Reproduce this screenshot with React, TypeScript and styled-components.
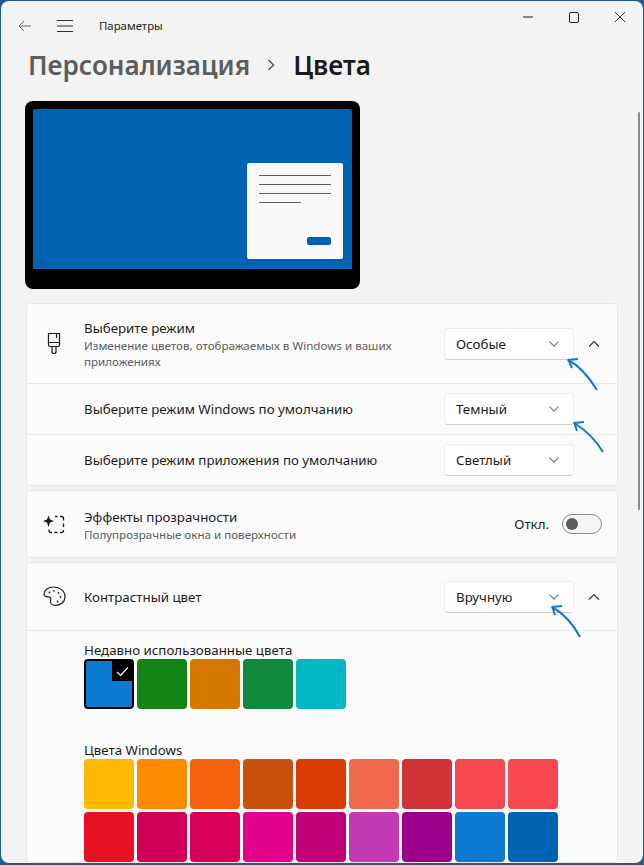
import React from 'react';
import styled, { createGlobalStyle } from 'styled-components';

const recentColors = ['#0c7ad0', '#128516', '#d47800', '#10893e', '#00b7c3'];
const windowsColors = [
  '#ffb900', '#ff8c00', '#f7630c', '#ca5010', '#da3b01', '#ef6950', '#d13438', '#f7474f', '#f7474f',
  '#e81123', '#cf0055', '#d60056', '#e3008c', '#bf0077', '#c239b3', '#9a0089', '#0c7ad0', '#0063b1',
];

const Brush = () => (
  <svg width="20" height="23" viewBox="0 0 20 23" fill="none" stroke="#1b1b1b" strokeWidth="1.2">
    <path d="M4.500 1.500h11v11.500a1.500 1.500 0 0 1-1.500 1.500H6A1.500 1.500 0 0 1 4.500 13zM4.500 10.500h11M12.500 1.500v4.500M8 14.500v5a2 2 0 0 0 4 0v-5" />
  </svg>
);

const Sparkle = () => (
  <svg width="24" height="24" viewBox="0 0 24 24" fill="none" stroke="#1b1b1b" strokeWidth="1.3">
    <path d="M6.500 3.500l1.500 4 4 1.500-4 1.500-1.500 4.500-1.500-4.500L1 9l4-1.500z" fill="#1b1b1b" stroke="none" />
    <path d="M13 4.500h2.500M18 4.500h1.500A2 2 0 0 1 21.500 6.500V8.500M21.500 11.500v3.500M21.500 18v.500a2 2 0 0 1-2 2H18M15.500 20.500h-3M10 20.500H9a2 2 0 0 1-2-2v-1" />
  </svg>
);

const Palette = () => (
  <svg width="23" height="21" viewBox="0 0 23 21" fill="none" stroke="#1b1b1b" strokeWidth="1.2">
    <path d="M10.500 1c-5 0-9.500 3-9.500 7 0 2.300 2.200 3 3.800 2.800 1.900-.2 3 .6 3 2.200 0 .8-.3 1.400-.3 2.400 0 2.400 2.400 4 5 4 5 0 9.500-3.500 9.500-8.400C22 4.700 16.800 1 10.500 1z" />
    <circle cx="6.500" cy="6.500" r=".9" fill="#1b1b1b" stroke="none" />
    <circle cx="11" cy="4.800" r=".9" fill="#1b1b1b" stroke="none" />
    <circle cx="15.500" cy="6.800" r=".9" fill="#1b1b1b" stroke="none" />
    <circle cx="17.500" cy="11" r=".9" fill="#1b1b1b" stroke="none" />
    <circle cx="14.500" cy="15.500" r=".9" fill="#1b1b1b" stroke="none" />
  </svg>
);

const Chevron = ({ up }: { up?: boolean }) => (
  <ChevronIcon width={up ? 12 : 10} height={up ? 8 : 6} viewBox={up ? '0 0 12 8' : '0 0 10 6'} $up={up}>
    <path d={up ? 'M1 1.500l5 5 5-5' : 'M.5 .7L5 5.200 9.500 .7'} fill="none" stroke="currentColor" strokeWidth="1.100" />
  </ChevronIcon>
);

const Select = ({ label }: { label: string }) => (
  <SelectBox>
    {label}
    <Chevron />
  </SelectBox>
);

const Arrow = ({ d, head }: { d: string; head: string }) => (
  <>
    <path d={d} fill="none" stroke="#0f78d0" strokeWidth="2" />
    <path d={head} fill="none" stroke="#0f78d0" strokeWidth="2" />
  </>
);

export default function App() {
  return (
    <>
      <GlobalStyle />
      <Window>
        <TitleBar>
          <BarIcon $gap={25} width="14" height="12" viewBox="0 0 14 12">
            <path d="M6 1L1 6l5 5M1 6h12" fill="none" stroke="#6a6a6a" strokeWidth="1" />
          </BarIcon>
          <BarIcon $gap={26} width="16" height="14" viewBox="0 0 16 14">
            <path d="M0 1.500h16M0 7h16M0 12.500h16" fill="none" stroke="#333" strokeWidth="1.100" />
          </BarIcon>
          <AppName>Параметры</AppName>
          <WindowButtons>
            <svg width="10" height="10" viewBox="0 0 10 10">
              <path d="M0 5h10" stroke="#222" strokeWidth="1" />
            </svg>
            <svg width="10" height="11" viewBox="0 0 10 11">
              <rect x=".5" y=".5" width="9" height="10" rx="1.500" fill="none" stroke="#222" />
            </svg>
            <svg width="10" height="10" viewBox="0 0 10 10">
              <path d="M0 0l10 10M10 0L0 10" stroke="#222" strokeWidth=".9" />
            </svg>
          </WindowButtons>
        </TitleBar>

        <Heading>
          <Crumb>Персонализация</Crumb>
          <CrumbSep width="8" height="12" viewBox="0 0 8 12">
            <path d="M1.500 1l5 5-5 5" fill="none" stroke="#555" strokeWidth="1.400" />
          </CrumbSep>
          <Current>Цвета</Current>
        </Heading>

        <Content>
          <Preview>
            <Screen>
              <Dialog>
                <DialogLine />
                <DialogLine />
                <DialogLine />
                <DialogLine $short />
                <DialogButton />
              </Dialog>
            </Screen>
          </Preview>

          <Card>
            <MainRow $height={79}>
              <IconCell><Brush /></IconCell>
              <RowText>
                <RowTitle>Выберите режим</RowTitle>
                <RowHint>Изменение цветов, отображаемых в Windows и ваших приложениях</RowHint>
              </RowText>
              <Select label="Особые" />
              <Expander><Chevron up /></Expander>
            </MainRow>
            <SubRow>
              <RowTitle>Выберите режим Windows по умолчанию</RowTitle>
              <Select label="Темный" />
            </SubRow>
            <SubRow>
              <RowTitle>Выберите режим приложения по умолчанию</RowTitle>
              <Select label="Светлый" />
            </SubRow>
          </Card>

          <Card>
            <MainRow $height={66}>
              <IconCell><Sparkle /></IconCell>
              <RowText>
                <RowTitle>Эффекты прозрачности</RowTitle>
                <RowHint>Полупрозрачные окна и поверхности</RowHint>
              </RowText>
              <ToggleLabel>Откл.</ToggleLabel>
              <Toggle />
            </MainRow>
          </Card>

          <Card>
            <MainRow $height={67}>
              <IconCell><Palette /></IconCell>
              <RowText>
                <RowTitle>Контрастный цвет</RowTitle>
              </RowText>
              <Select label="Вручную" />
              <Expander><Chevron up /></Expander>
            </MainRow>
            <ColorsPanel>
              <ColorsTitle>Недавно использованные цвета</ColorsTitle>
              <Swatches>
                {recentColors.map((color, i) => (
                  <Swatch key={color} $color={color} $selected={i === 0}>
                    {i === 0 && (
                      <CheckCorner>
                        <svg width="13" height="11" viewBox="0 0 13 11">
                          <path d="M1 6l3.500 3.500L12 1.500" fill="none" stroke="#fff" strokeWidth="1.100" />
                        </svg>
                      </CheckCorner>
                    )}
                  </Swatch>
                ))}
              </Swatches>
              <ColorsTitle $spaced>Цвета Windows</ColorsTitle>
              <Swatches>
                {windowsColors.map((color, i) => (
                  <Swatch key={i} $color={color} />
                ))}
              </Swatches>
            </ColorsPanel>
          </Card>
        </Content>

        <ScrollThumb />
        <ArrowLayer width="644" height="865" viewBox="0 0 644 865">
          <Arrow d="M597 390C589 377 580 366 568 360" head="M568 359l4 9M568 360l10-1" />
          <Arrow d="M603 452C595 439 586 430 574 423" head="M574 422l3 9M574 423l10-1" />
          <Arrow d="M580 637C573 624 565 614 552 607" head="M552 606l3 9M552 607l10-1" />
        </ArrowLayer>
      </Window>
    </>
  );
}

const GlobalStyle = createGlobalStyle`
  html, body {
    margin: 0;
    height: 100%;
    overflow: hidden;
    background: #235a8c;
  }

  body {
    font-family: 'Noto Sans', 'Open Sans', sans-serif;
    color: #1b1b1b;
  }
`;

const Window = styled.div`
  position: relative;
  width: 642px;
  height: 862px;
  margin: 1px 0 0 1px;
  background: #f3f3f3;
  border-radius: 8px;
  overflow: hidden;
  display: flex;
  flex-direction: column;
`;

const TitleBar = styled.div`
  display: flex;
  align-items: center;
  height: 49px;
  flex-shrink: 0;
  padding-left: 17px;
`;

const BarIcon = styled.svg<{ $gap: number }>`
  margin-right: ${({ $gap }) => $gap}px;
  flex-shrink: 0;
`;

const AppName = styled.span`
  font-size: 11.4px;
  color: #222;
`;

const WindowButtons = styled.div`
  margin-left: auto;
  align-self: flex-start;
  display: flex;
  gap: 36px;
  padding: 11px 18px 0 0;
`;

const Heading = styled.div`
  display: flex;
  align-items: center;
  height: 30px;
  padding-left: 27px;
  flex-shrink: 0;
`;

const Crumb = styled.span`
  font-size: 26.1px;
  font-weight: 600;
  color: #5d5d5d;
`;

const CrumbSep = styled.svg`
  margin: 0 18px 0 17px;
`;

const Current = styled.span`
  font-size: 26.1px;
  font-weight: 600;
  color: #1b1b1b;
`;

const Content = styled.div`
  padding: 21px 25px 0 25px;
  display: flex;
  flex-direction: column;
`;

const Preview = styled.div`
  width: 335px;
  height: 188px;
  box-sizing: border-box;
  padding: 8px 8px 20px;
  background: #000;
  border-radius: 8px;
  margin: 0 0 14px -1px;
`;

const Screen = styled.div`
  height: 160px;
  box-sizing: border-box;
  background: #0063b1;
  border-radius: 2px 2px 0 0;
  display: flex;
  justify-content: flex-end;
  align-items: flex-end;
  padding: 0 9px 10px 0;
`;

const Dialog = styled.div`
  width: 96px;
  height: 96px;
  box-sizing: border-box;
  padding: 12px 12px 0;
  background: #f9f9f9;
  border-radius: 2px;
  display: flex;
  flex-direction: column;
  gap: 8px;
`;

const DialogLine = styled.div<{ $short?: boolean }>`
  height: 1px;
  width: ${({ $short }) => ($short ? '42px' : '72px')};
  background: #5e5e5e;
`;

const DialogButton = styled.div`
  width: 24px;
  height: 8px;
  margin: 26px 0 0 auto;
  background: #0063b1;
  border-radius: 2px;
`;

const Card = styled.section`
  background: #fbfbfb;
  border: 1px solid #e8e8e8;
  border-radius: 4px;
  margin-bottom: 4px;
  flex-shrink: 0;
`;

const MainRow = styled.div<{ $height: number }>`
  display: flex;
  align-items: center;
  height: ${({ $height }) => $height}px;
  padding-right: 15px;
`;

const IconCell = styled.div`
  width: 57px;
  box-sizing: border-box;
  padding-right: 3px;
  flex-shrink: 0;
  display: flex;
  justify-content: center;
`;

const RowText = styled.div`
  flex: 1;
  min-width: 0;
  padding: 2px 24px 0 0;
`;

const RowTitle = styled.div`
  font-size: 13.3px;
  line-height: 19px;
  color: #1b1b1b;
`;

const RowHint = styled.div`
  font-size: 11.6px;
  line-height: 16px;
  color: #5d5d5d;
`;

const SelectBox = styled.div`
  width: 130px;
  height: 32px;
  box-sizing: border-box;
  flex-shrink: 0;
  display: flex;
  align-items: center;
  justify-content: space-between;
  padding: 0 14px 0 11px;
  background: #fff;
  border: 1px solid #ececec;
  border-bottom-color: #d0d0d0;
  border-radius: 4px;
  font-size: 13.3px;
  color: #1b1b1b;
`;

const ChevronIcon = styled.svg<{ $up?: boolean }>`
  color: ${({ $up }) => ($up ? '#333' : '#777')};
  transform: ${({ $up }) => ($up ? 'rotate(180deg)' : 'none')};
`;

const Expander = styled.div`
  width: 14px;
  margin: 0 1px 0 13px;
  display: flex;
  justify-content: center;
`;

const SubRow = styled.div`
  display: flex;
  align-items: center;
  justify-content: space-between;
  height: 50px;
  border-top: 1px solid #e8e8e8;
  padding: 0 43px 0 57px;
`;

const ToggleLabel = styled.span`
  font-size: 13.3px;
  margin-right: 13px;
`;

const Toggle = styled.div`
  position: relative;
  width: 40px;
  height: 20px;
  box-sizing: border-box;
  border: 1px solid #8a8a8a;
  border-radius: 10px;
  background: #f4f4f4;

  &::after {
    content: '';
    position: absolute;
    left: 3px;
    top: 3px;
    width: 12px;
    height: 12px;
    border-radius: 50%;
    background: #5d5d5d;
  }
`;

const ColorsPanel = styled.div`
  border-top: 1px solid #e8e8e8;
  padding: 10px 20px 0 57px;
`;

const ColorsTitle = styled.div<{ $spaced?: boolean }>`
  font-size: 13.3px;
  line-height: 18px;
  margin-top: ${({ $spaced }) => ($spaced ? '32px' : '0')};
`;

const Swatches = styled.div`
  display: grid;
  grid-template-columns: repeat(9, 50px);
  gap: 3px;
`;

const Swatch = styled.div<{ $color: string; $selected?: boolean }>`
  position: relative;
  height: 50px;
  box-sizing: border-box;
  background: ${({ $color }) => $color};
  border-radius: 4px;
  border: ${({ $selected }) => ($selected ? '2px solid #000' : 'none')};
  overflow: hidden;
`;

const CheckCorner = styled.div`
  position: absolute;
  right: 0;
  top: 0;
  width: 20px;
  height: 20px;
  background: #000;
  display: flex;
  align-items: center;
  justify-content: center;
`;

const ScrollThumb = styled.div`
  position: absolute;
  right: 3px;
  top: 111px;
  width: 2px;
  height: 398px;
  background: #8a8a8a;
  border-radius: 1px;
`;

const ArrowLayer = styled.svg`
  position: absolute;
  left: -1px;
  top: -1px;
  pointer-events: none;
`;
